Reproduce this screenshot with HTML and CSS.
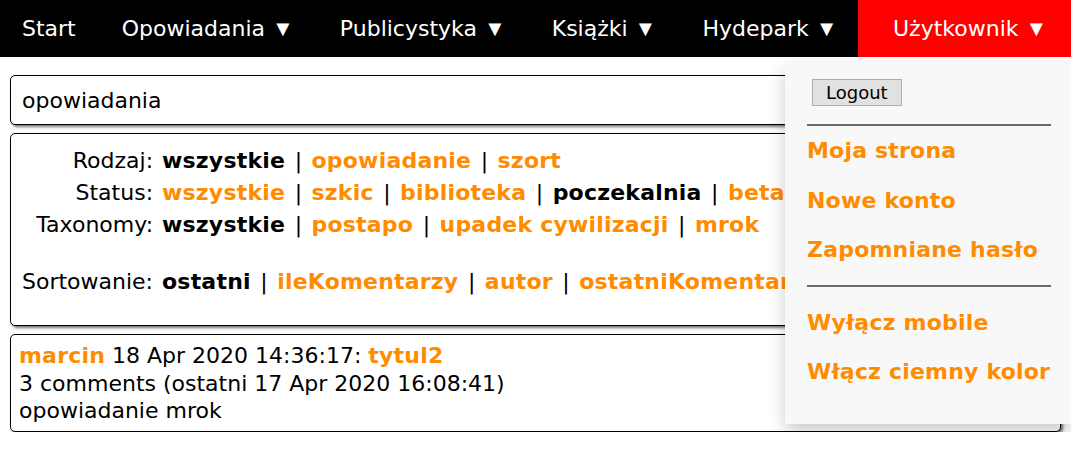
FILE: index.html
```html
<!DOCTYPE html>
<html lang="pl">
<head>
<meta charset="utf-8">
<title>Opowiadania</title>
<link rel="stylesheet" href="styles.css">
</head>
<body>
<nav class="topnav">
  <div class="nav-main">
    <a class="nav-item first" href="#">Start</a>
    <a class="nav-item" href="#">Opowiadania <span class="caret">▼</span></a>
    <a class="nav-item" href="#">Publicystyka <span class="caret">▼</span></a>
    <a class="nav-item" href="#">Książki <span class="caret">▼</span></a>
    <a class="nav-item" href="#">Hydepark <span class="caret">▼</span></a>
  </div>
  <div class="user-menu">
    <a class="nav-item user-trigger" href="#">Użytkownik <span class="caret">▼</span></a>
    <div class="dropdown">
      <button class="logout" type="button">Logout</button>
      <hr class="menu-sep first">
      <a class="menu-link" href="#">Moja strona</a>
      <a class="menu-link" href="#">Nowe konto</a>
      <a class="menu-link" href="#">Zapomniane hasło</a>
      <hr class="menu-sep second">
      <a class="menu-link" href="#">Wyłącz mobile</a>
      <a class="menu-link" href="#">Włącz ciemny kolor</a>
    </div>
  </div>
</nav>
<main class="content">
  <input class="card search" type="text" value="opowiadania">
  <section class="card filters">
    <div class="filter-grid">
      <span class="label">Rodzaj:</span>
      <span class="values"><b class="sel">wszystkie</b><span class="sep">|</span><a href="#">opowiadanie</a><span class="sep">|</span><a href="#">szort</a></span>
      <span class="label">Status:</span>
      <span class="values"><a href="#">wszystkie</a><span class="sep">|</span><a href="#">szkic</a><span class="sep">|</span><a href="#">biblioteka</a><span class="sep">|</span><b class="sel">poczekalnia</b><span class="sep">|</span><a href="#">beta</a></span>
      <span class="label">Taxonomy:</span>
      <span class="values"><b class="sel">wszystkie</b><span class="sep">|</span><a href="#">postapo</a><span class="sep">|</span><a href="#">upadek cywilizacji</a><span class="sep">|</span><a href="#">mrok</a></span>
      <span class="label spacer-row">Sortowanie:</span>
      <span class="values spacer-row"><b class="sel">ostatni</b><span class="sep">|</span><a href="#">ileKomentarzy</a><span class="sep">|</span><a href="#">autor</a><span class="sep">|</span><a href="#">ostatniKomentarz</a></span>
    </div>
  </section>
  <article class="card entry">
    <div><a href="#">marcin</a> 18 Apr 2020 14:36:17: <a href="#">tytul2</a></div>
    <div>3 comments (ostatni 17 Apr 2020 16:08:41)</div>
    <div>opowiadanie mrok</div>
  </article>
</main>
</body>
</html>
```
FILE: styles.css
```css
* { box-sizing: border-box; }

body {
  margin: 0;
  font-family: "DejaVu Sans", Verdana, sans-serif;
  font-size: 22px;
  color: #000;
  background: #fff;
  overflow: hidden;
}

a { color: #ff8c00; text-decoration: none; font-weight: bold; letter-spacing: 0.2px; }

.topnav {
  display: flex;
  align-items: stretch;
  height: 57px;
  background: #000;
}

.nav-main {
  display: flex;
  flex: 1 1 auto;
  min-width: 0;
  overflow: hidden;
}

.topnav .nav-item {
  display: flex;
  align-items: center;
  white-space: pre;
  padding: 0 23px;
  color: #fff;
  font-weight: normal;
  letter-spacing: 0;
  line-height: 57px;
  flex-shrink: 0;
}

.topnav .nav-item.first { padding-left: 22px; }

.caret {
  font-family: "Liberation Sans", Arial, sans-serif;
}

.user-menu {
  flex: 0 0 213px;
  position: relative;
  display: flex;
}

.topnav .user-trigger {
  background: #ff0000;
  width: 213px;
  padding: 0 0 0 35px;
}

.dropdown {
  position: absolute;
  top: 61px;
  right: 0;
  width: 286px;
  background: #f8f8f8;
  box-shadow: 0 8px 16px rgba(0, 0, 0, 0.2);
  padding: 18px 0 27px 0;
  display: flex;
  flex-direction: column;
  z-index: 10;
}

.logout {
  align-self: flex-start;
  margin-left: 27px;
  font-family: "DejaVu Sans", Verdana, sans-serif;
  font-size: 18px;
  line-height: 22px;
  padding: 1px 13px;
  height: 27px;
  background: #e1e1e1;
  border: 1px solid #adadad;
  border-radius: 0;
  color: #000;
}

.menu-sep {
  border: 0;
  height: 2px;
  background: #6a6a6a;
  margin: 0 20px 0 22px;
}

.menu-sep.first { margin-top: 18px; }
.menu-sep.second { margin-top: 10px; margin-bottom: 11px; }

.menu-link {
  display: block;
  white-space: nowrap;
  padding: 12px 22px;
  font-size: 22px;
  line-height: 25.5px;
}

.content {
  padding: 18px 10px 0 10px;
  display: flex;
  flex-direction: column;
  gap: 8px;
}

.card {
  border: 1px solid #000;
  border-radius: 5px;
  box-shadow: 2px 2px 3px rgba(0, 0, 0, 0.55);
  background: #fff;
}

.search {
  height: 50px;
  width: 100%;
  padding: 0 11px;
  font-family: "DejaVu Sans", Verdana, sans-serif;
  font-size: 22px;
  color: #000;
  outline: none;
}

.filters {
  height: 193px;
  padding: 11px 11px 26px 11px;
}

.filter-grid {
  display: grid;
  grid-template-columns: max-content 1fr;
  column-gap: 9px;
  line-height: 32px;
}

.label { text-align: right; }

.values { white-space: nowrap; overflow: hidden; }

.values b, .values a { font-weight: bold; letter-spacing: 0.2px; }

.sep {
  font-weight: normal;
  color: #000;
  margin: 0 9.5px;
}

.sel { color: #000; }

.spacer-row { margin-top: 25px; }

.entry {
  height: 98px;
  padding: 7px 8px 6px 8px;
  line-height: 27.5px;
}
```
